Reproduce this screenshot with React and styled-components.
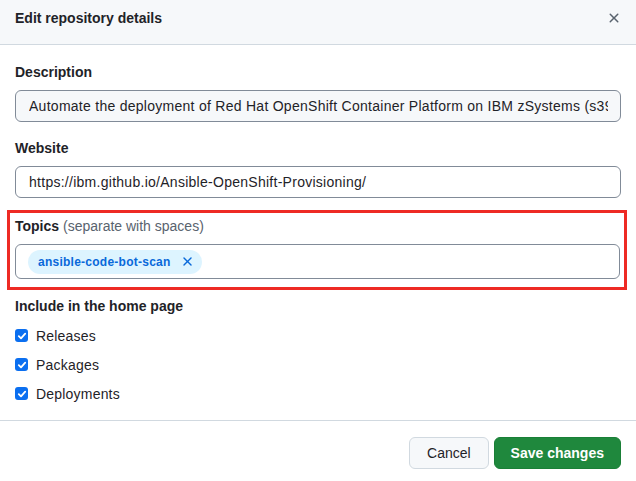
import React from 'react'
import styled, { createGlobalStyle } from 'styled-components'

const GlobalStyle = createGlobalStyle`
  html, body {
    margin: 0;
    padding: 0;
    background: #fff;
  }
  body {
    font-family: "Liberation Sans", Arial, sans-serif;
    color: #1f2328;
    -webkit-font-smoothing: antialiased;
  }
`

const Dialog = styled.div`
  width: 636px;
  height: 481px;
  overflow: hidden;
  background: #fff;
  display: flex;
  flex-direction: column;
  & > * {
    flex-shrink: 0;
  }
`

const Header = styled.div`
  height: 45px;
  box-sizing: border-box;
  background: #f6f8fa;
  border-bottom: 1px solid #d1d9e0;
  display: flex;
  align-items: center;
  justify-content: space-between;
  padding: 0 16px 8px 15px;
  & > h1 {
    margin: 0;
    font-size: 14px;
    font-weight: 700;
    color: #1f2328;
  }
`

const CloseBtn = styled.button`
  border: 0;
  background: transparent;
  padding: 0;
  width: 16px;
  height: 16px;
  display: flex;
  align-items: center;
  justify-content: center;
  color: #59636e;
  margin-right: -2px;
`

const Body = styled.div`
  padding: 17px 15px 0 15px;
  display: flex;
  flex-direction: column;
  border-bottom: 1px solid #d1d9e0;
  height: 376px;
  box-sizing: border-box;
`

const Field = styled.div`
  display: flex;
  flex-direction: column;
  gap: 8px;
  margin-bottom: ${p => p.$mb || 16}px;
`

const Label = styled.label`
  font-size: 14px;
  font-weight: 700;
  line-height: 20px;
  color: #1f2328;
  & > span {
    font-weight: 400;
    color: #59636e;
  }
`

const Input = styled.input`
  height: 32px;
  box-sizing: border-box;
  width: 100%;
  border: 1px solid #818b98;
  border-radius: 6px;
  background: ${p => (p.$muted ? '#f6f8fa' : '#fff')};
  padding: 0 12px 0 13px;
  font-family: "Liberation Sans", Arial, sans-serif;
  font-size: 14px;
  letter-spacing: 0.27px;
  color: #1f2328;
  outline: none;
`

const Highlight = styled.div`
  margin: 0 -6px 6px -8px;
  padding: 3px 4px 8px 5px;
  border: 3px solid #ee2a24;
  display: flex;
  flex-direction: column;
  gap: 8px;
`

const TopicBox = styled.div`
  height: 35px;
  box-sizing: border-box;
  border: 1px solid #818b98;
  border-radius: 6px;
  display: flex;
  align-items: center;
  padding: 0 12px;
`

const Topic = styled.span`
  display: inline-flex;
  align-items: center;
  gap: 9px;
  height: 24px;
  padding: 0 7px 0 10px;
  border-radius: 12px;
  background: #ddf4ff;
  color: #0969da;
  font-size: 12px;
  letter-spacing: 0.25px;
  font-weight: 700;
`

const Group = styled.div`
  display: flex;
  flex-direction: column;
`

const GroupTitle = styled.div`
  font-size: 14px;
  font-weight: 700;
  line-height: 20px;
  margin-bottom: 5px;
`

const CheckRow = styled.label`
  display: flex;
  align-items: center;
  gap: 8px;
  height: 29px;
  font-size: 14px;
  letter-spacing: 0.2px;
  color: #1f2328;
`

const Box = styled.span`
  width: 13px;
  height: 13px;
  border-radius: 3px;
  background: #0b6ff0;
  display: flex;
  align-items: center;
  justify-content: center;
`

const Footer = styled.div`
  display: flex;
  justify-content: flex-end;
  gap: 5px;
  padding: 16px 15px;
`

const Button = styled.button`
  height: 32px;
  box-sizing: border-box;
  border-radius: 6px;
  font-family: "Liberation Sans", Arial, sans-serif;
  font-size: 14px;
  font-weight: ${p => (p.$primary ? 700 : 500)};
  padding: 0 ${p => (p.$primary ? 16 : 17)}px;
  border: 1px solid ${p => (p.$primary ? '#1a7f37' : '#d1d9e0')};
  background: ${p => (p.$primary ? '#1f883d' : '#f6f8fa')};
  color: ${p => (p.$primary ? '#fff' : '#1f2328')};
`

const XIcon = ({ size }) => (
  <svg width={size} height={size} viewBox="0 0 16 16" fill="currentColor">
    <path d="M3.72 3.72a.75.75 0 0 1 1.06 0L8 6.94l3.22-3.22a.749.749 0 0 1 1.275.326.749.749 0 0 1-.215.734L9.06 8l3.22 3.22a.749.749 0 0 1-.326 1.275.749.749 0 0 1-.734-.215L8 9.06l-3.22 3.22a.751.751 0 0 1-1.042-.018.751.751 0 0 1-.018-1.042L6.94 8 3.72 4.78a.75.75 0 0 1 0-1.06Z" />
  </svg>
)

const Check = ({ label }) => (
  <CheckRow>
    <Box>
      <svg width="10" height="10" viewBox="0 0 10 10">
        <path d="M1.8 5.2 L4 7.3 L8.2 2.6" stroke="#fff" strokeWidth="1.8" fill="none" strokeLinecap="round" strokeLinejoin="round" />
      </svg>
    </Box>
    {label}
  </CheckRow>
)

const App = () => {
  return (
    <Dialog>
      <GlobalStyle />
      <Header>
        <h1>Edit repository details</h1>
        <CloseBtn>
          <XIcon size={16} />
        </CloseBtn>
      </Header>
      <Body>
        <Field>
          <Label>Description</Label>
          <Input $muted readOnly value="Automate the deployment of Red Hat OpenShift Container Platform on IBM zSystems (s390x)" />
        </Field>
        <Field $mb={12}>
          <Label>Website</Label>
          <Input readOnly value="https://ibm.github.io/Ansible-OpenShift-Provisioning/" />
        </Field>
        <Highlight>
          <Label>Topics <span>(separate with spaces)</span></Label>
          <TopicBox>
            <Topic>
              ansible-code-bot-scan
              <XIcon size={15} />
            </Topic>
          </TopicBox>
        </Highlight>
        <Group>
          <GroupTitle>Include in the home page</GroupTitle>
          <Check label="Releases" />
          <Check label="Packages" />
          <Check label="Deployments" />
        </Group>
      </Body>
      <Footer>
        <Button>Cancel</Button>
        <Button $primary>Save changes</Button>
      </Footer>
    </Dialog>
  )
}

export default App
